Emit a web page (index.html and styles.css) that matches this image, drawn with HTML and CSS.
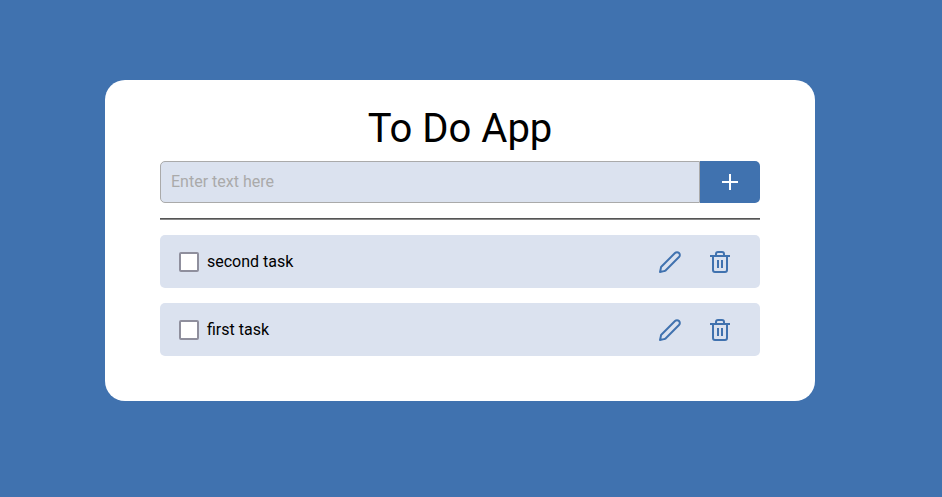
FILE: index.html
```html
<!DOCTYPE html>
<html lang="en">
<head>
<meta charset="utf-8">
<title>To Do App</title>
<link rel="stylesheet" href="styles.css">
</head>
<body>
<main class="card">
  <h1 class="title">To Do App</h1>
  <form class="entry">
    <input class="entry-input" type="text" placeholder="Enter text here">
    <button class="entry-add" type="button" aria-label="Add">
      <svg class="icon square" viewBox="0 0 24 24"><path d="M12 4v16M4 12h16"/></svg>
    </button>
  </form>
  <hr class="divider">
  <ul class="tasks">
    <li class="task">
      <input class="check" type="checkbox" id="t2">
      <label class="label" for="t2">second task</label>
      <svg class="icon edit" viewBox="0 0 24 24"><path d="M2.876 18.116c.046-.414.069-.621.131-.814a2 2 0 0 1 .234-.485c.111-.17.258-.317.553-.61L17 3a2.828 2.828 0 1 1 4 4L7.794 20.206c-.295.295-.442.442-.612.553a2 2 0 0 1-.485.234c-.193.062-.4.085-.814.131L2 22z"/></svg>
      <svg class="icon square" viewBox="0 0 24 24"><path d="M2 6h20M19 6v14a2 2 0 0 1-2 2H7a2 2 0 0 1-2-2V6M8 6V4a2 2 0 0 1 2-2h4a2 2 0 0 1 2 2v2M10 10v8M14 10v8"/></svg>
    </li>
    <li class="task">
      <input class="check" type="checkbox" id="t1">
      <label class="label" for="t1">first task</label>
      <svg class="icon edit" viewBox="0 0 24 24"><path d="M2.876 18.116c.046-.414.069-.621.131-.814a2 2 0 0 1 .234-.485c.111-.17.258-.317.553-.61L17 3a2.828 2.828 0 1 1 4 4L7.794 20.206c-.295.295-.442.442-.612.553a2 2 0 0 1-.485.234c-.193.062-.4.085-.814.131L2 22z"/></svg>
      <svg class="icon square" viewBox="0 0 24 24"><path d="M2 6h20M19 6v14a2 2 0 0 1-2 2H7a2 2 0 0 1-2-2V6M8 6V4a2 2 0 0 1 2-2h4a2 2 0 0 1 2 2v2M10 10v8M14 10v8"/></svg>
    </li>
  </ul>
</main>
</body>
</html>
```
FILE: styles.css
```css
* { box-sizing: border-box; }
body { margin: 0; background: #4072af; font-family: Roboto, sans-serif; font-size: 16px; color: #000; }
.card { width: 710px; height: 321px; margin: 80px 0 0 105px; padding: 25px 55px 0; background: #fff; border-radius: 20px; }
.title { margin: 0 0 9px; font-size: 40px; font-weight: 400; line-height: 47px; text-align: center; }
.entry { display: flex; height: 42px; }
.entry-input { flex: 1; min-width: 0; padding: 0 10px 2px; border: 1px solid #aaa; border-radius: 5px 0 0 5px; background: #dbe2ef; font: inherit; }
.entry-input::placeholder { color: #aaa; opacity: 1; }
.entry-add { width: 60px; padding: 0; display: flex; align-items: center; justify-content: center; border: 0; border-radius: 0 5px 5px 0; background: #4072af; color: #fff; }
.icon { width: 24px; height: 24px; flex: none; fill: none; stroke: currentColor; stroke-width: 2; stroke-linecap: round; stroke-linejoin: round; }
.square { stroke-linecap: butt; }
.divider { height: 2px; margin: 15px 0; border: 0; border-top: 1px solid #555; background: #888; }
.tasks { margin: 0; padding: 0; list-style: none; display: grid; gap: 15px; }
.task { display: flex; align-items: center; height: 53px; padding: 0 28px 0 19px; border-radius: 5px; background: #dbe2ef; color: #4072af; }
.check { appearance: none; width: 20px; height: 20px; margin: 0 8px 0 0; border: 2px solid #8f8f9d; border-radius: 2px; background: #fff; }
.label { flex: 1; color: #000; }
.edit { margin-right: 26px; }
```
